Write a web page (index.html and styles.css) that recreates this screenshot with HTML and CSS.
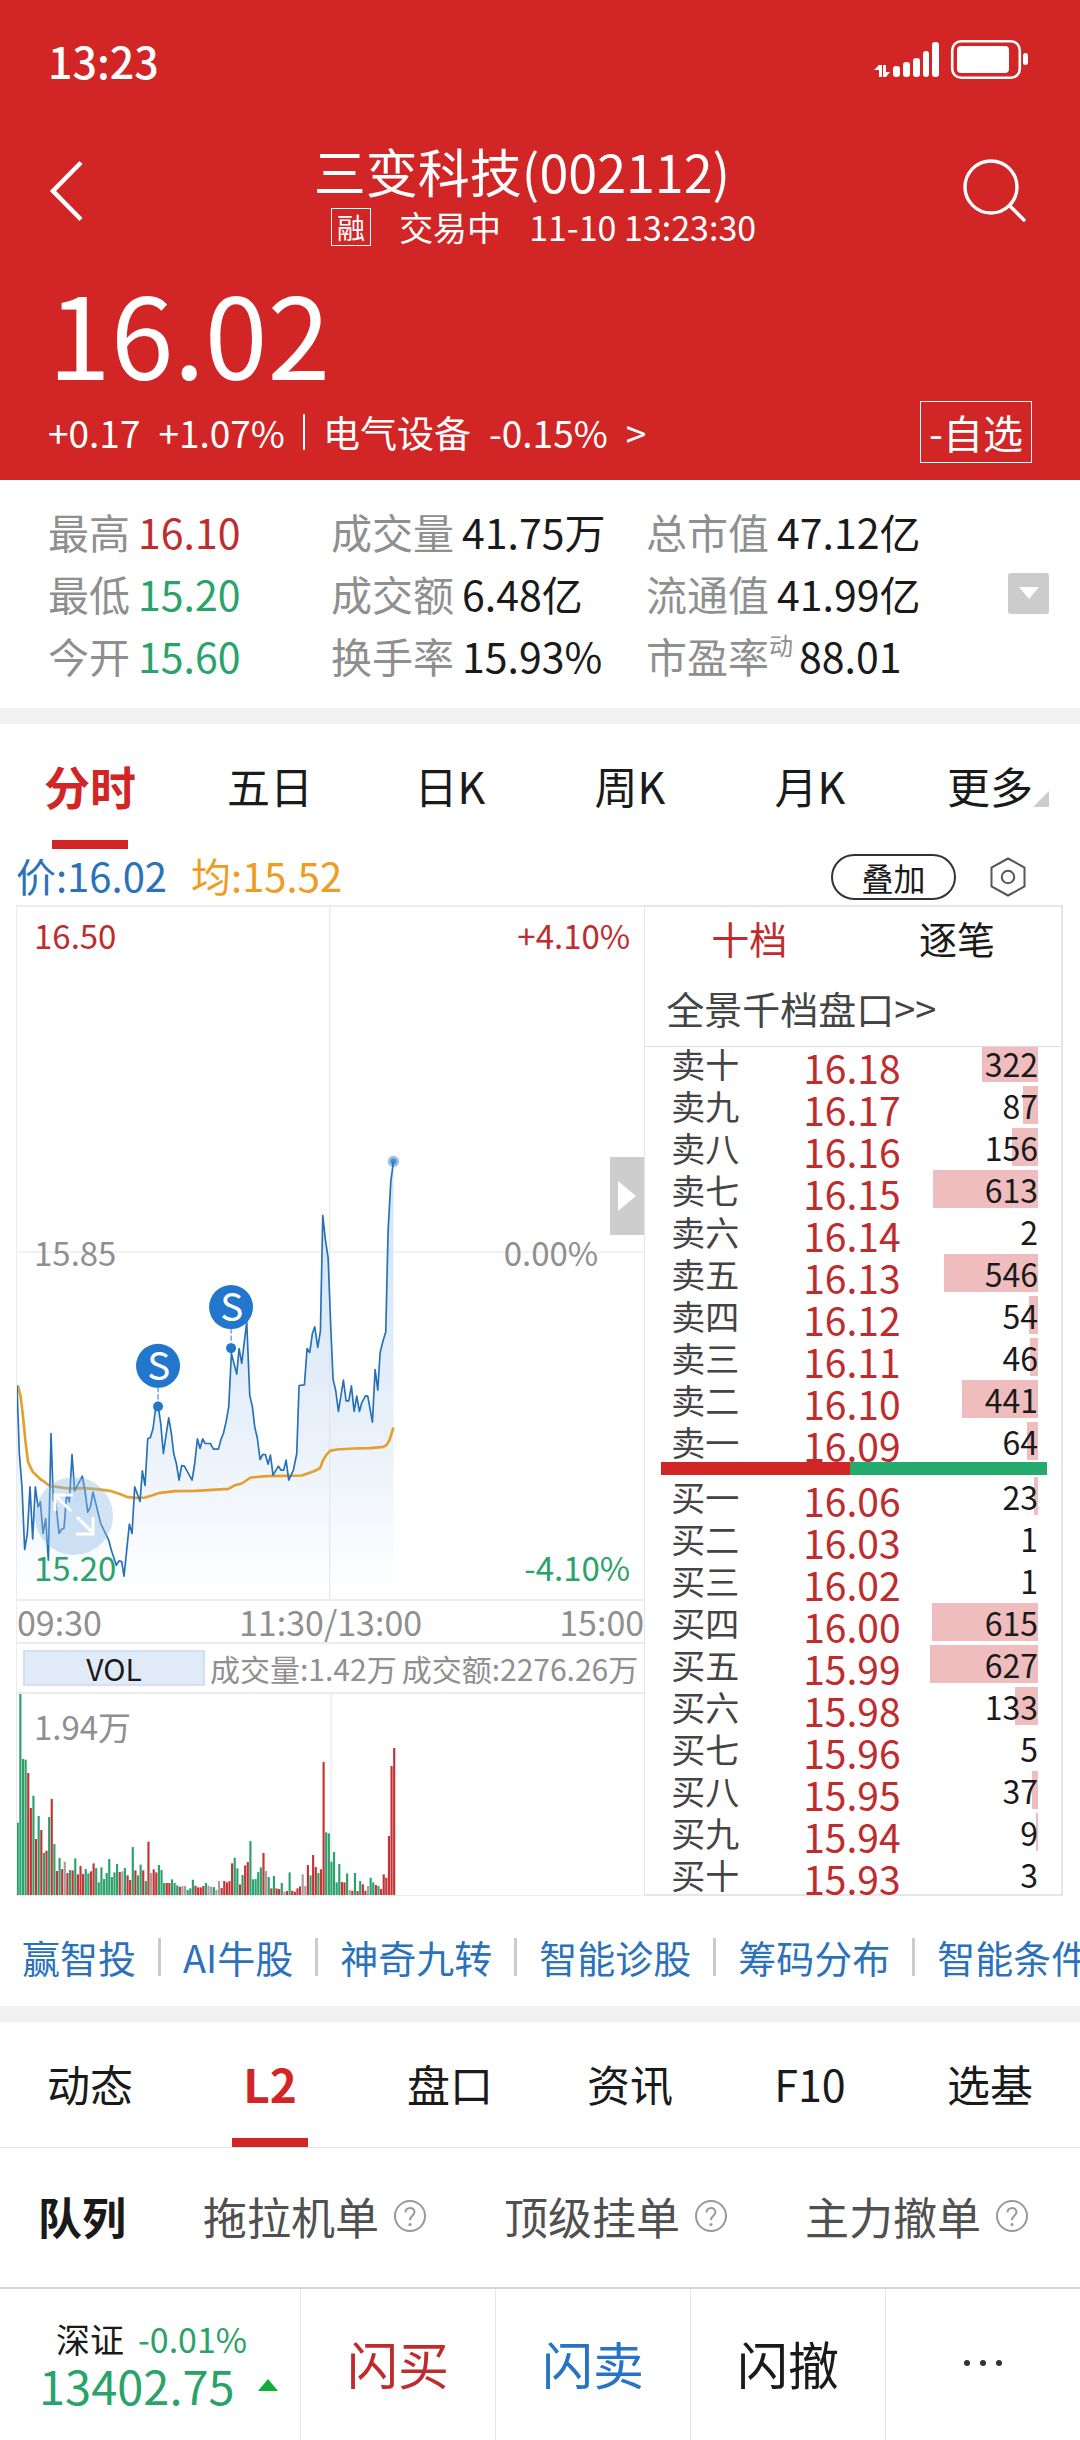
FILE: index.html
```html
<!DOCTYPE html>
<html lang="zh-CN">
<head>
<meta charset="utf-8">
<meta name="viewport" content="width=device-width, initial-scale=1">
<title>三变科技(002112)</title>
<link rel="stylesheet" href="styles.css">
</head>
<body>
<header class="hero">
  <div class="status">
    <span class="clock">13:23</span>
    <svg class="status-icons" viewBox="0 0 156 42" width="156" height="42" aria-label="信号与电量">
      <g fill="#fff">
        <path d="M0 31 L5 26 L8 26 L8 38 L5 38 L5 31 Z"/>
        <path d="M9 26 L12 26 L12 33 L16 33 L12 38 L9 38 Z"/>
        <rect x="19" y="27" width="7" height="11" rx="3"/>
        <rect x="29" y="23" width="7" height="15" rx="3"/>
        <rect x="39" y="19" width="7" height="19" rx="3"/>
        <rect x="49" y="12" width="6" height="26" rx="3"/>
        <rect x="58" y="3" width="7" height="35" rx="3"/>
        <rect x="83" y="7" width="52" height="27" rx="4"/>
        <rect x="149" y="14" width="5" height="12" rx="2.5"/>
      </g>
      <rect x="78.2" y="2.2" width="67.600" height="36.600" rx="9" fill="none" stroke="#fff" stroke-width="2.6"/>
    </svg>
  </div>
  <div class="nav">
    <button class="icon-btn" type="button" aria-label="返回">
      <svg viewBox="0 0 36 62" width="36" height="62"><path d="M33 2.500 L5 31 L33 59.500" fill="none" stroke="#fff" stroke-width="4.500"/></svg>
    </button>
    <div class="nav-title">
      <h1>三变科技(002112)</h1>
      <p class="sub"><span class="badge">融</span><span>交易中</span><span>11-10 13:23:30</span></p>
    </div>
    <button class="icon-btn search" type="button" aria-label="搜索">
      <svg viewBox="0 0 64 64" width="64" height="64"><g fill="none" stroke="#fff" stroke-width="3.400" stroke-linecap="round"><circle cx="29" cy="28" r="26"/><path d="M47.500 46.500 L62 61"/></g></svg>
    </button>
  </div>
  <div class="price">16.02</div>
  <div class="meta">
    <span>+0.17</span><span>+1.07%</span><i class="bar"></i><span>电气设备</span><span>-0.15%</span><span>&gt;</span>
    <button class="fav" type="button">-自选</button>
  </div>
</header>

<section class="stats">
  <dl>
    <div><dt>最高</dt><dd class="up">16.10</dd></div>
    <div><dt>成交量</dt><dd>41.75万</dd></div>
    <div><dt>总市值</dt><dd>47.12亿</dd></div>
    <div><dt>最低</dt><dd class="down">15.20</dd></div>
    <div><dt>成交额</dt><dd>6.48亿</dd></div>
    <div><dt>流通值</dt><dd>41.99亿</dd></div>
    <div><dt>今开</dt><dd class="down">15.60</dd></div>
    <div><dt>换手率</dt><dd>15.93%</dd></div>
    <div class="tight"><dt>市盈率<sup>动</sup></dt><dd>88.01</dd></div>
  </dl>
  <button class="expand" type="button" aria-label="展开">
    <svg viewBox="0 0 20 12" width="20" height="12"><path d="M0 0 H20 L10 12 Z" fill="#fff"/></svg>
  </button>
</section>

<nav class="tabs">
  <button type="button" class="on">分时</button>
  <button type="button">五日</button>
  <button type="button">日K</button>
  <button type="button">周K</button>
  <button type="button">月K</button>
  <button type="button" class="more">更多</button>
</nav>

<div class="legend">
  <span class="blue">价:16.02</span>
  <span class="orange">均:15.52</span>
  <button class="overlay" type="button">叠加</button>
  <button class="icon-btn" type="button" aria-label="设置">
    <svg viewBox="0 0 36 42" width="36" height="42"><g fill="none" stroke="#555" stroke-width="2"><path d="M18 2.500 L34.500 11.500 V30.500 L18 39.500 L1.500 30.500 V11.500 Z"/><circle cx="18" cy="21" r="6.200"/></g></svg>
  </button>
</div>

<main class="market">
  <section class="charts">
    <div class="chart">
      <svg class="plot" viewBox="0 0 1881 2076">
        <defs>
          <linearGradient id="fade" gradientUnits="userSpaceOnUse" x1="0" y1="124" x2="0" y2="1430">
            <stop offset="0" stop-color="#cfe3f8"/>
            <stop offset="0.600" stop-color="#e8f0fa"/>
            <stop offset="1" stop-color="#fff"/>
          </linearGradient>
        </defs>
        <path class="grid-mid" d="M0 1035 H1881"/>
        <g transform="translate(-51 639)">
          <path id="area" fill="url(#fade)"/>
          <path class="grid-v" d="M989 -639 V1437"/>
          <polyline class="avg" points="54,797 62,830 68,880 76,960 84,1025 98,1055 112,1068 125,1080 135,1086 150,1098 170,1100 205,1105 250,1104 290,1107 330,1112 355,1120 380,1130 405,1133 435,1132 455,1126 475,1119 525,1113 585,1112 635,1109 685,1106 705,1095 725,1090 752,1072 800,1068 850,1067 905,1066 940,1054 960,1044 968,1022 978,1005 990,992 1010,988 1060,985 1110,984 1150,980 1160,974 1168,960 1180,922"/>
          <polyline class="line" id="line" points="51,795 58,1000 66,1100 74,1288 82,1240 90,1100 98,1256 106,1100 114,1160 121,1145 129,1240 137,1195 145,1320 153,940 160,1140 168,1150 177,1240 184,1228 192,1224 200,1120 208,1145 216,1003 224,1112 231,1098 247,1068 255,1112 263,1176 271,1160 279,1116 302,1210 326,1260 334,1290 349,1335 357,1322 365,1324 372,1368 380,1290 388,1212 396,1240 404,1100 420,1144 427,1052 435,1096 443,956 451,952 459,925 467,862 475,862 482,910 490,1000 498,945 506,893 514,940 521,1000 529,1030 537,1080 545,1036 553,1038 576,1080 584,1030 592,956 600,985 608,956 615,970 631,970 640,987 655,987 663,957 670,940 678,905 686,860 694,700 710,762 717,685 725,730 740,605 749,825 757,860 764,920 772,955 780,1018 788,1003 796,1003 804,1032 811,1005 819,1065 835,1038 843,1050 851,1050 858,1020 866,1080 880,1050 890,1000 897,796 913,794 921,685 929,697 937,640 944,620 953,682 961,632 968,286 976,360 984,412 992,620 999,778 1007,812 1015,874 1030,780 1038,842 1046,842 1054,797 1062,874 1070,828 1078,874 1085,848 1096,827 1103,828 1117,906 1125,748 1133,810 1140,698 1148,665 1157,635 1164,330 1172,185 1180,124"/>
          <circle cx="1180" cy="124" r="17" fill="#2276cc" opacity="0.450"/>
          <circle cx="1180" cy="124" r="9" fill="#2276cc" opacity="0.700"/>
          <path class="stem" d="M474 800 V859 M693 624 V684"/>
          <g fill="#2276cc">
            <circle cx="474" cy="859" r="15"/><circle cx="693" cy="684" r="15"/>
            <circle cx="474" cy="737" r="66"/><circle cx="693" cy="561" r="66"/>
          </g>
          <text class="mark" x="476" y="780">S</text>
          <text class="mark" x="695" y="604">S</text>
        </g>
      </svg>
      <span class="tag top left up">16.50</span>
      <span class="tag top right up">+4.10%</span>
      <span class="tag mid left">15.85</span>
      <span class="tag mid inset">0.00%</span>
      <button class="zoom" type="button" aria-label="全屏">
        <svg viewBox="0 0 78 78" width="78" height="78"><g fill="none" stroke="#fff" stroke-width="3"><path d="M36 34 L20 18 M20 34 V18 H38"/><path d="M42 40 L58 56 M58 40 V57 H41"/></g></svg>
      </button>
      <span class="tag bottom left down">15.20</span>
      <span class="tag bottom right down">-4.10%</span>
      <button class="handle" type="button" aria-label="收起盘口">
        <svg viewBox="0 0 18 30" width="18" height="30"><path d="M0 0 L18 15 L0 30 Z" fill="#fff"/></svg>
      </button>
    </div>
    <div class="times"><span>09:30</span><span>11:30/13:00</span><span>15:00</span></div>
    <div class="vol-head">
      <button class="vol-pick" type="button">VOL</button>
      <span>成交量:1.42万</span><span>成交额:2276.26万</span>
    </div>
    <div class="vol-chart">
      <svg class="plot" viewBox="0 0 1881 603">
        <path class="grid-v" d="M942 0 V603"/>
        <g id="bars"></g>
      </svg>
      <span class="tag vol-max">1.94万</span>
    </div>
  </section>

  <section class="book">
    <div class="book-tabs"><button type="button" class="on">十档</button><button type="button">逐笔</button></div>
    <a class="book-link" href="#depth">全景千档盘口&gt;&gt;</a>
    <div class="book-rows">
      <table class="sell">
        <tr><th>卖十</th><td class="p">16.18</td><td class="v"><i style="width:56px"></i><b>322</b></td></tr>
        <tr><th>卖九</th><td class="p">16.17</td><td class="v"><i style="width:15px"></i><b>87</b></td></tr>
        <tr><th>卖八</th><td class="p">16.16</td><td class="v"><i style="width:26px"></i><b>156</b></td></tr>
        <tr><th>卖七</th><td class="p">16.15</td><td class="v"><i style="width:105px"></i><b>613</b></td></tr>
        <tr><th>卖六</th><td class="p">16.14</td><td class="v"><b>2</b></td></tr>
        <tr><th>卖五</th><td class="p">16.13</td><td class="v"><i style="width:94px"></i><b>546</b></td></tr>
        <tr><th>卖四</th><td class="p">16.12</td><td class="v"><i style="width:9px"></i><b>54</b></td></tr>
        <tr><th>卖三</th><td class="p">16.11</td><td class="v"><i style="width:8px"></i><b>46</b></td></tr>
        <tr><th>卖二</th><td class="p">16.10</td><td class="v"><i style="width:76px"></i><b>441</b></td></tr>
        <tr><th>卖一</th><td class="p">16.09</td><td class="v"><i style="width:11px"></i><b>64</b></td></tr>
      </table>
      <div class="ratio"><i style="width:49%"></i></div>
      <table class="buy">
        <tr><th>买一</th><td class="p">16.06</td><td class="v"><i style="width:4px"></i><b>23</b></td></tr>
        <tr><th>买二</th><td class="p">16.03</td><td class="v"><b>1</b></td></tr>
        <tr><th>买三</th><td class="p">16.02</td><td class="v"><b>1</b></td></tr>
        <tr><th>买四</th><td class="p">16.00</td><td class="v"><i style="width:106px"></i><b>615</b></td></tr>
        <tr><th>买五</th><td class="p">15.99</td><td class="v"><i style="width:108px"></i><b>627</b></td></tr>
        <tr><th>买六</th><td class="p">15.98</td><td class="v"><i style="width:23px"></i><b>133</b></td></tr>
        <tr><th>买七</th><td class="p">15.96</td><td class="v"><b>5</b></td></tr>
        <tr><th>买八</th><td class="p">15.95</td><td class="v"><i style="width:6px"></i><b>37</b></td></tr>
        <tr><th>买九</th><td class="p">15.94</td><td class="v"><i style="width:2px"></i><b>9</b></td></tr>
        <tr><th>买十</th><td class="p">15.93</td><td class="v"><b>3</b></td></tr>
      </table>
    </div>
  </section>
</main>

<nav class="links">
  <a href="#a">赢智投</a><a href="#b">AI牛股</a><a href="#c">神奇九转</a><a href="#d">智能诊股</a><a href="#e">筹码分布</a><a href="#f">智能条件单</a>
</nav>

<nav class="tabs ruled">
  <button type="button">动态</button>
  <button type="button" class="on">L2</button>
  <button type="button">盘口</button>
  <button type="button">资讯</button>
  <button type="button">F10</button>
  <button type="button">选基</button>
</nav>

<nav class="subtabs">
  <button type="button" class="on">队列</button>
  <button type="button">拖拉机单<svg viewBox="0 0 34 34" width="34" height="34"><use href="#help"/></svg></button>
  <button type="button">顶级挂单<svg viewBox="0 0 34 34" width="34" height="34"><use href="#help"/></svg></button>
  <button type="button">主力撤单<svg viewBox="0 0 34 34" width="34" height="34"><use href="#help"/></svg></button>
</nav>
<svg class="sprite" width="0" height="0" aria-hidden="true">
  <symbol id="help" viewBox="0 0 34 34"><g fill="none" stroke="#999" stroke-width="2"><circle cx="17" cy="17" r="15"/><path d="M12.500 13.500 C12.500 7.500 21.500 7.500 21.500 13 C21.500 16.500 17 17 17 21"/></g><circle cx="17" cy="25.500" r="1.600" fill="#999"/></symbol>
</svg>

<footer class="dock">
  <div class="index">
    <p class="index-name">深证<span class="down">-0.01%</span></p>
    <p class="index-value">13402.75<svg viewBox="0 0 20 12" width="20" height="12"><path d="M10 0 L20 12 H0 Z" fill="#12ad3e"/></svg></p>
  </div>
  <button type="button" class="buy-btn">闪买</button>
  <button type="button" class="sell-btn">闪卖</button>
  <button type="button">闪撤</button>
  <button type="button" aria-label="更多"><svg viewBox="0 0 40 8" width="40" height="8"><g fill="#333"><circle cx="4" cy="4" r="3"/><circle cx="20" cy="4" r="3"/><circle cx="36" cy="4" r="3"/></g></svg></button>
</footer>
<script src="chart.js"></script>
</body>
</html>
```
FILE: styles.css
```css
* { box-sizing: border-box; margin: 0; padding: 0; }

:root {
  --red: #d22526;
  --up: #bf2c2e;
  --down: #2aa36a;
  --blue: #2b72bb;
  --ink: #1a1a1a;
  --grey: #8f8f8f;
  --line: #ececec;
}

body {
  background: #fff;
  color: var(--ink);
  font-family: "Noto Sans CJK SC", "Noto Sans", sans-serif;
  font-size: 38px;
  overflow-x: hidden;
}

button { font: inherit; color: inherit; background: none; border: 0; white-space: nowrap; }
a { color: inherit; text-decoration: none; }
svg { display: block; flex: none; }
.up { color: var(--up); }
.down { color: var(--down); }
.blue { color: var(--blue); }
.orange { color: #ec9d22; }
.icon-btn { display: flex; }

/* header */
.hero { background: var(--red); color: #fff; padding: 0 48px 17px; }
.status { display: flex; justify-content: space-between; align-items: center; height: 120px; padding-right: 2px; }
.clock { font-size: 43px; font-weight: 500; line-height: 56px; }
.nav { display: flex; justify-content: space-between; align-items: center; height: 142px; }
.nav-title { padding: 7px 0 0 38px; text-align: center; }
h1 { font-size: 52px; font-weight: 400; line-height: 64px; padding-right: 40px; }
.sub { display: flex; align-items: center; justify-content: flex-end; gap: 28px; padding-right: 14px; font-size: 34px; line-height: 48px; }
.badge { border: 1px solid #fff; font-size: 28px; line-height: 36px; padding: 0 5px; }
.search { padding-right: 6px; }
.price { font-size: 113px; line-height: 134px; padding-top: 2px; }
.meta { display: flex; align-items: center; gap: 18px; height: 62px; margin-top: 3px; font-size: 37px; line-height: 60px; white-space: nowrap; }
.bar { width: 2px; height: 36px; background: #fff; }
.fav { margin-left: auto; border: 1px solid #fff; font-size: 40px; line-height: 60px; padding: 0 8px; }

/* key figures */
.stats { display: flex; align-items: center; padding: 20px 31px 22px 48px; font-size: 41px; line-height: 62px; border-bottom: 16px solid #f1f1f1; }
.stats dl { flex: 1; display: grid; grid-template-columns: 283fr 315fr 362fr; }
.stats dl div { display: flex; gap: 8px; white-space: nowrap; }
.stats dl .tight { gap: 6px; }
dt { color: var(--grey); }
sup { font-size: 24px; line-height: 24px; vertical-align: 18px; }
.expand { width: 41px; height: 41px; background: #ccc; border-radius: 3px; display: flex; align-items: center; justify-content: center; }

/* tab rows */
.tabs { display: grid; grid-template-columns: repeat(6, 1fr); font-size: 43px; }
.tabs button { position: relative; height: 125px; padding-bottom: 4px; }
.tabs .on { font-size: 46px; font-weight: 700; color: var(--red); }
.tabs .on::after { content: ""; position: absolute; bottom: 0; left: 50%; width: 76px; margin-left: -38px; height: 9px; background: var(--red); }
.tabs .more::after { content: ""; position: absolute; right: 31px; bottom: 42px; border: 8px solid transparent; border-right-color: #ccc; border-bottom-color: #ccc; }
.ruled { border-top: 16px solid #f1f1f1; border-bottom: 1px solid #e4e4e4; }

/* legend above the chart */
.legend { display: flex; align-items: center; height: 56px; padding: 0 54px 0 16px; font-size: 40px; line-height: 52px; }
.legend span { margin-right: 24px; padding-bottom: 4px; }
.overlay { margin-left: auto; margin-right: 34px; border: 2px solid #333; border-radius: 23px; width: 125px; height: 46px; font-size: 32px; line-height: 40px; }

/* charts */
.market { display: grid; grid-template-columns: 3fr 2fr; padding: 0 17px 0 16px; }
.charts { min-width: 0; border-left: 1px solid var(--line); border-bottom: 1px solid var(--line); font-size: 34px; color: var(--grey); }
.chart, .vol-chart { position: relative; font-size: 33px; }
.chart { border-top: 2px solid var(--line); border-bottom: 2px solid var(--line); }
.plot { width: 100%; height: auto; }
.grid-mid { stroke: #f2f2f2; stroke-width: 6; }
.grid-v { stroke: #e2e2e2; stroke-width: 3; }
.line { fill: none; stroke: #2670b8; stroke-width: 5; stroke-linejoin: round; }
.avg { fill: none; stroke: #e59f2c; stroke-width: 8; stroke-linejoin: round; }
.stem { stroke: #2b72b8; stroke-width: 3; stroke-dasharray: 16 6; }
.mark { fill: #fff; font-size: 116px; text-anchor: middle; }
.tag { position: absolute; line-height: 40px; }
.tag.up { color: var(--up); }
.tag.down { color: var(--down); }
.left { left: 17px; }
.right { right: 14px; }
.inset { right: 46px; }
.top { top: 8px; }
.mid { top: 47%; }
.bottom { bottom: 12px; }
.vol-max { left: 17px; top: 12px; }
.zoom { position: absolute; left: 18px; bottom: 44px; border-radius: 50%; background: rgba(140, 184, 228, 0.4); }
.handle { position: absolute; right: 0; top: 250px; width: 34px; height: 78px; background: #cdcdcd; display: flex; align-items: center; justify-content: center; }
.times { display: flex; justify-content: space-between; line-height: 41px; }
.times span { flex: 1; }
.times span:nth-child(2) { text-align: center; }
.times span:last-child { text-align: right; }
.vol-head { display: flex; align-items: center; gap: 5px; height: 52px; padding-left: 6px; border-top: 2px solid var(--line); border-bottom: 2px solid var(--line); font-size: 30px; line-height: 36px; white-space: nowrap; }
.vol-pick { width: 182px; height: 36px; background: #e1ebf8; border: 2px solid #d2e0f5; color: var(--ink); line-height: 30px; }

/* order book */
.book { display: flex; flex-direction: column; min-width: 0; border: 2px solid #e6e6e6; border-left-width: 1px; }
.book-tabs { display: grid; grid-template-columns: 1fr 1fr; }
.book-tabs button { line-height: 62px; }
.book-tabs .on { color: var(--up); }
.book-link { color: #444; line-height: 77px; padding-left: 21px; border-bottom: 1px solid #ddd; }
.book-rows { display: flow-root; }
.book table { width: 100%; border-collapse: collapse; table-layout: fixed; }
.sell { margin-top: -3px; }
.buy { margin: 2px 0 -3px; }
.book tr { height: 42px; }
.book th { width: 38%; padding-left: 26px; text-align: left; font-weight: 400; font-size: 34px; line-height: 40px; color: #444; }
.book .p { padding-top: 4px; font-size: 39px; line-height: 38px; color: var(--up); }
.book .v { position: relative; width: 31%; padding-right: 23px; text-align: right; font-size: 32px; line-height: 38px; }
.book th, .book td { vertical-align: top; }
.v i { position: absolute; right: 23px; top: 0; height: 38px; background: #f0bdbf; }
.sell tr:first-child i { top: 3px; height: 35px; }
.v b { position: relative; font-weight: 400; }
.ratio { position: relative; margin: -2px 14px 0 16px; height: 13px; background: #24aa6d; }
.ratio i { display: block; height: 13px; background: var(--red); }

/* shortcuts */
.links { display: flex; height: 110px; padding: 12px 0 0 22px; align-items: center; overflow: hidden; white-space: nowrap; color: var(--blue); }
.links a { display: flex; align-items: center; flex: none; line-height: 56px; }
.links a + a::before { content: ""; width: 3px; height: 38px; margin: 0 22px; background: #ccc; }

.subtabs { display: flex; gap: 77px; height: 139px; padding: 0 0 4px 38px; overflow: hidden; font-size: 44px; color: #505050; }
.subtabs button { display: flex; align-items: center; gap: 14px; flex: none; }
.subtabs .on { font-weight: 700; color: var(--ink); }
.sprite { position: absolute; }

/* bottom dock */
.dock { display: grid; grid-template-columns: 300fr 195fr 195fr 195fr 195fr; height: 153px; border-top: 2px solid #d5d5d5; font-size: 51px; }
.dock button { display: flex; align-items: center; justify-content: center; padding-bottom: 4px; border-left: 1px solid #e6e6e6; }
.dock .buy-btn { color: var(--up); }
.dock .sell-btn { color: #2874c4; }
.index { padding: 27px 0 0 39px; line-height: 46px; white-space: nowrap; }
.index-name { display: flex; gap: 14px; padding-left: 17px; font-size: 34px; }
.index-value { display: flex; align-items: center; gap: 23px; font-size: 47px; color: var(--down); }
```
FILE: chart.js
```js
// Per-minute volume: colour key (g fall, r rise, x flat) followed by bar height.
const volume = (
  "g217 g603 g408 g406 r366 r261 g298 r168 g237 r195 g127 r133 g234 r288 g153 r72 g111 r78 x100 r66 " +
  "g75 r74 g110 r62 r87 r63 g78 g65 r71 r95 g81 g38 g83 g48 g66 g108 g54 g68 g93 r69 " +
  "x71 g81 r59 r45 g144 r74 g59 g91 r74 g42 r160 x66 r77 r68 g90 g75 g36 r36 r36 g47 " +
  "g36 g29 r25 x27 x27 g15 g20 g46 r28 r23 r23 r27 g36 x28 x25 g24 x15 x42 r21 r42 " +
  "r38 r42 r95 g112 g80 r32 g60 r89 r99 g162 g47 g48 g69 g83 r126 x72 g54 r20 g57 r20 " +
  "r18 g36 x10 r12 g68 r13 r10 r20 r26 x62 x27 r90 g59 r120 r84 g66 r77 r399 g188 g185 " +
  "g100 g129 g38 g93 r39 r38 g65 x15 r13 g66 r12 g42 r32 r13 x27 g52 g38 r30 g27 r18 " +
  "r62 r52 r177 r387 r441"
).split(" ");
const colours = { g: "#2ba26d", r: "#c23436", x: "#a3a0a0" };
const step = 7.84;
const base = 603;

document.getElementById("bars").innerHTML = volume.map((item, i) => {
  const h = Number(item.slice(1));
  return `<rect x="${(i * step - 1).toFixed(1)}" y="${base - h}" width="6.500" height="${h}" fill="${colours[item[0]]}"/>`;
}).join("");

// The shaded area reuses the price line, closed along the bottom edge.
const points = document.getElementById("line").getAttribute("points");
document.getElementById("area").setAttribute("d", `M51 1437 L${points.split(" ").join(" L")} V1437 Z`);
```
